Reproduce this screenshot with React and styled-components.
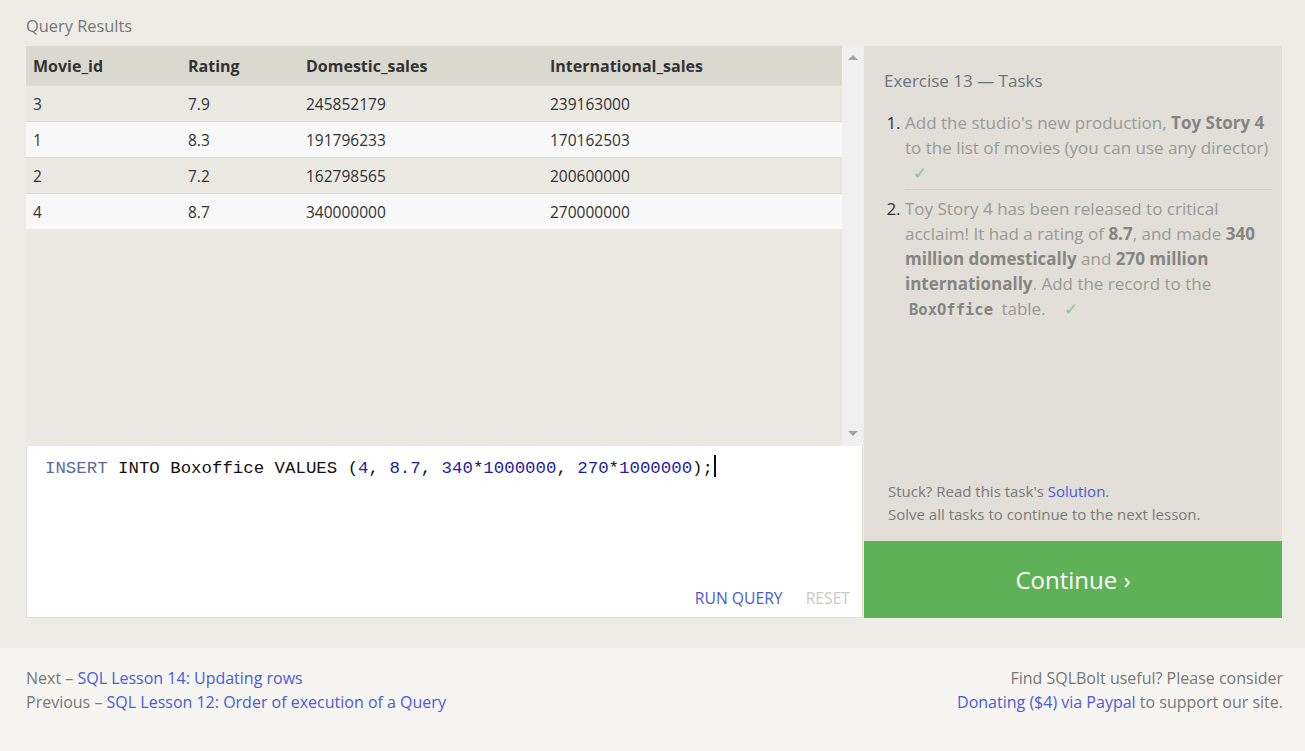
import React from "react"
import styled, { createGlobalStyle } from "styled-components"

const GlobalStyle = createGlobalStyle`
    html, body {
        margin: 0;
        padding: 0;
        background: #eeece6;
    }
    body {
        font-family: "Open Sans", "Noto Sans", sans-serif;
        color: #333;
    }
`

const Page = styled.div`
    display: flex;
    flex-direction: column;
    min-height: 100vh;
`
const Main = styled.div`
    padding: 14px 23px 30px 26px;
    background: #eeece6;
`
const Label = styled.div`
    height: 32px;
    font-size: 16.4px;
    line-height: 24px;
    color: #777;
`
const Workspace = styled.div`
    display: flex;
    gap: 1px;
`
const LeftCol = styled.div`
    width: 837px;
    display: flex;
    flex-direction: column;
`
const ResultsPane = styled.div`
    display: flex;
    height: 400px;
    background: #eae9e2;
`
const TableArea = styled.div`
    flex: 1;
`
const Table = styled.table`
    width: 100%;
    border-collapse: collapse;
    table-layout: fixed;
`
const Th = styled.th`
    width: ${p => p.w ? p.w + "px" : "auto"};
    height: 39px;
    padding: 0 7px;
    text-align: left;
    font-size: 16px;
    font-weight: 700;
    color: #333;
    background: #dad9d0;
`
const Tr = styled.tr`
    background: ${p => p.alt ? "#f8f8f8" : "#eae9e2"};
    border-top: 1px solid #dcdbd4;
`
const Td = styled.td`
    height: 35px;
    padding: 0 7px;
    font-size: 15.5px;
    color: #333;
`
const Scrollbar = styled.div`
    width: 21px;
    background: #f0f0f1;
    display: flex;
    flex-direction: column;
    justify-content: space-between;
    align-items: center;
    padding: 9px 0 10px;
    box-sizing: border-box;
`
const Arrow = styled.div`
    width: 0;
    height: 0;
    border-left: 5px solid transparent;
    border-right: 5px solid transparent;
    ${p => p.down
        ? "border-top: 5px solid #a3a3a3;"
        : "border-bottom: 5px solid #a3a3a3;"}
`
const Editor = styled.div`
    height: 172px;
    box-sizing: border-box;
    background: #fff;
    border: 1px solid #dedcd4;
    border-top: none;
    display: flex;
    flex-direction: column;
    justify-content: space-between;
    padding: 9px 12px 8px 18px;
`
const Code = styled.div`
    font-family: "Liberation Mono", "DejaVu Sans Mono", monospace;
    font-size: 17.4px;
    line-height: 26px;
    color: #111;
    white-space: pre;
`
const Kw = styled.span`
    color: #5a6b9c;
`
const Num = styled.span`
    color: #1c1ca8;
`
const Cursor = styled.span`
    display: inline-block;
    width: 2px;
    height: 22px;
    background: #111;
    vertical-align: -4px;
    margin-left: 1px;
`
const EditorActions = styled.div`
    display: flex;
    justify-content: flex-end;
    gap: 23px;
`
const ActionLink = styled.span`
    font-size: 15.7px;
    color: ${p => p.muted ? "#c9c9c9" : "#4a5ad9"};
`
const RightCol = styled.div`
    flex: 1;
    display: flex;
    flex-direction: column;
`
const TaskPanel = styled.div`
    flex: 1;
    background: #e1dfd8;
    padding: 22px 10px 15px 20px;
    display: flex;
    flex-direction: column;
`
const TaskTitle = styled.div`
    font-size: 17px;
    line-height: 26px;
    color: #6e737a;
`
const TaskList = styled.ol`
    margin: 16px 0 0;
    padding-left: 21px;
`
const Task = styled.li`
    font-size: 17px;
    line-height: 25px;
    color: #9a9a96;
    padding: ${p => p.first ? "0 0 4px" : "6px 0 0"};
    ${p => !p.first && "border-top: 1px solid #d3d1c9;"}
    &::marker {
        color: #333;
    }
    b {
        color: #858581;
        font-weight: 700;
    }
`
const Check = styled.span`
    color: #8cc788;
    margin-left: ${p => p.indent ? "8px" : "14px"};
`
const CodeTag = styled.code`
    font-family: "DejaVu Sans Mono", "Liberation Mono", monospace;
    font-weight: 700;
    font-size: 15.5px;
    color: #858581;
    padding: 0 4px;
`
const Hint = styled.div`
    margin-top: auto;
    font-size: 15px;
    line-height: 23px;
    color: #7a7a7a;
    padding-left: 4px;
`
const Link = styled.a`
    color: #4a5ad9;
    text-decoration: none;
`
const ContinueButton = styled.div`
    height: 77px;
    background: #5fb158;
    color: #fff;
    font-size: 24px;
    display: flex;
    align-items: center;
    justify-content: center;
`
const Footer = styled.div`
    flex: 1;
    background: #f6f5f2;
    padding: 18px 22px 30px 26px;
    display: flex;
    justify-content: space-between;
    font-size: 16px;
    line-height: 24px;
    color: #777;
`
const FooterRight = styled.div`
    text-align: right;
`

const rows = [
    ["3", "7.9", "245852179", "239163000"],
    ["1", "8.3", "191796233", "170162503"],
    ["2", "7.2", "162798565", "200600000"],
    ["4", "8.7", "340000000", "270000000"],
]

const App = () => {
    return (
        <Page>
            <GlobalStyle />
            <Main>
                <Label>Query Results</Label>
                <Workspace>
                    <LeftCol>
                        <ResultsPane>
                            <TableArea>
                                <Table>
                                    <thead>
                                        <tr>
                                            <Th w={141}>Movie_id</Th>
                                            <Th w={104}>Rating</Th>
                                            <Th w={230}>Domestic_sales</Th>
                                            <Th>International_sales</Th>
                                        </tr>
                                    </thead>
                                    <tbody>
                                        {rows.map((r, i) => (
                                            <Tr key={i} alt={i % 2 === 1}>
                                                {r.map((c, j) => <Td key={j}>{c}</Td>)}
                                            </Tr>
                                        ))}
                                    </tbody>
                                </Table>
                            </TableArea>
                            <Scrollbar>
                                <Arrow />
                                <Arrow down />
                            </Scrollbar>
                        </ResultsPane>
                        <Editor>
                            <Code>
                                <Kw>INSERT</Kw> INTO Boxoffice VALUES (<Num>4</Num>, <Num>8.7</Num>, <Num>340</Num>*<Num>1000000</Num>, <Num>270</Num>*<Num>1000000</Num>);<Cursor />
                            </Code>
                            <EditorActions>
                                <ActionLink>RUN QUERY</ActionLink>
                                <ActionLink muted>RESET</ActionLink>
                            </EditorActions>
                        </Editor>
                    </LeftCol>
                    <RightCol>
                        <TaskPanel>
                            <TaskTitle>Exercise 13 — Tasks</TaskTitle>
                            <TaskList>
                                <Task first>
                                    Add the studio's new production, <b>Toy Story 4</b> to the list of movies (you can use any director)
                                    <br /><Check indent>✓</Check>
                                </Task>
                                <Task>
                                    Toy Story 4 has been released to critical acclaim! It had a rating of <b>8.7</b>, and made <b>340 million domestically</b> and <b>270 million internationally</b>. Add the record to the <CodeTag>BoxOffice</CodeTag> table. <Check>✓</Check>
                                </Task>
                            </TaskList>
                            <Hint>
                                Stuck? Read this task's <Link>Solution</Link>.<br />
                                Solve all tasks to continue to the next lesson.
                            </Hint>
                        </TaskPanel>
                        <ContinueButton>Continue ›</ContinueButton>
                    </RightCol>
                </Workspace>
            </Main>
            <Footer>
                <div>
                    Next – <Link>SQL Lesson 14: Updating rows</Link><br />
                    Previous – <Link>SQL Lesson 12: Order of execution of a Query</Link>
                </div>
                <FooterRight>
                    Find SQLBolt useful? Please consider<br />
                    <Link>Donating ($4) via Paypal</Link> to support our site.
                </FooterRight>
            </Footer>
        </Page>
    )
}

export default App
